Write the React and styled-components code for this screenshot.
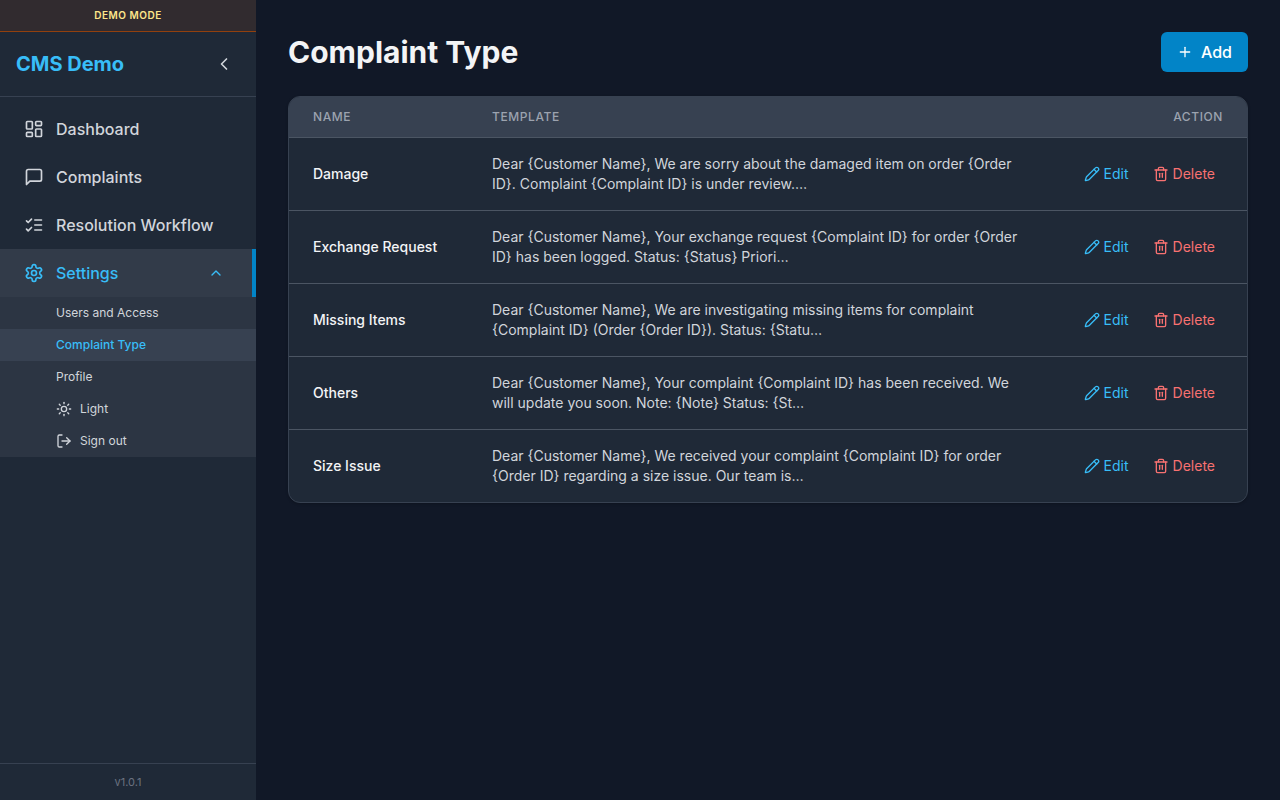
import React, { useState } from 'react';
import styled, { createGlobalStyle, css } from 'styled-components'
import {
    ChevronLeft, ChevronUp, LayoutDashboard, LogOut, Pencil, Plus, Sun, Trash2,
} from 'lucide-react'


const GlobalStyle = createGlobalStyle`
* {
    box-sizing: border-box;
}

body {
    margin: 0;
    background-color: #111827;
    color: #f3f4f6;
    font-family: Inter, "Liberation Sans", sans-serif;
    font-size: 16px;
    line-height: 24px;
}

button {
    border: 0;
    background: none;
    font: inherit;
    color: inherit;
    cursor: pointer;
}

a {
    color: inherit;
    text-decoration: none;
}

svg {
    flex-shrink: 0;
}
`;

export const Page = styled.div`
display: flex;
min-height: 100vh;
`;

export const Sidebar = styled.aside`
position: sticky;
top: 0;
display: flex;
flex-direction: column;
flex: 0 0 256px;
height: 100vh;
background-color: #1f2937;
`;

export const DemoBar = styled.div`
padding: 8px;
border-bottom: 1px solid #92400e;
background-color: #312b2f;
color: #fde68a;
font-size: 10px;
font-weight: 600;
line-height: 15px;
letter-spacing: 0.05em;
text-align: center;
text-transform: uppercase;
`;

export const Brand = styled.div`
display: flex;
align-items: center;
justify-content: space-between;
padding: 16px;
border-bottom: 1px solid #374151;
`;

export const BrandName = styled.span`
color: #38bdf8;
font-size: 20px;
font-weight: 700;
line-height: 28px;
`;

export const CollapseButton = styled.button`
display: flex;
padding: 6px;
color: #d1d5db;
`;

export const Nav = styled.nav`
flex: 1;
padding: 8px 0;
overflow-y: auto;
`;

export const NavIcon = styled.svg`
width: 20px;
height: 20px;
fill: none;
stroke: currentColor;
stroke-width: 2;
stroke-linecap: round;
stroke-linejoin: round;
`;

const navItem = css`
display: flex;
align-items: center;
gap: 12px;
width: 100%;
padding: 12px 24px;
color: #d1d5db;
font-weight: 500;
text-align: left;
`;

export const NavLink = styled.a`
${navItem}
`;

export const NavToggle = styled.button`
${navItem}
padding-right: 28px;
border-right: 4px solid #0284c7;
background-color: #323b49;
color: #38bdf8;

svg:last-child {
    margin-left: auto;
}
`;

export const SubMenu = styled.div`
background-color: #2c3543;
`;

const subItem = css`
display: flex;
align-items: center;
gap: 8px;
width: 100%;
padding: 8px 16px 8px 56px;
color: #d1d5db;
font-size: 12px;
line-height: 16px;
text-align: left;
`;

export const SubLink = styled.a`
${subItem}
${(props) => props.$active &&
    css`
    background-color: #374151;
    color: #38bdf8;
    font-weight: 500;
    `
}
`;

export const SubButton = styled.button`
${subItem}
`;

export const Version = styled.div`
padding: 10px;
border-top: 1px solid #374151;
color: #6b7280;
font-size: 11px;
line-height: 16px;
text-align: center;
`;

export const Main = styled.main`
flex: 1;
min-width: 0;
padding: 32px;
`;

export const PageHead = styled.div`
display: flex;
align-items: center;
justify-content: space-between;
margin-bottom: 24px;
`;

export const Title = styled.h1`
margin: 0;
font-size: 30px;
font-weight: 700;
line-height: 36px;
`;

export const AddButton = styled.button`
display: flex;
align-items: center;
gap: 8px;
padding: 8px 16px;
border-radius: 6px;
background-color: #0284c7;
color: #ffffff;
font-weight: 500;
`;

export const Card = styled.div`
overflow: hidden;
border: 1px solid #374151;
border-radius: 12px;
background-color: #1f2937;
box-shadow: 0 1px 3px rgba(0, 0, 0, 0.2);
`;

export const Table = styled.table`
width: 100%;
border-collapse: collapse;
font-size: 14px;
line-height: 20px;
`;

export const HeadCell = styled.th`
width: ${(props) => props.$width || "auto"};
padding: 12px 24px;
background-color: #374151;
color: #9ca3af;
font-size: 12px;
font-weight: 500;
line-height: 16px;
letter-spacing: 0.05em;
text-align: ${(props) => props.$right ? "right" : "left"};
text-transform: uppercase;
`;

export const Row = styled.tr`
border-top: 1px solid #4b5563;
`;

export const NameCell = styled.td`
padding: 16px 24px;
font-weight: 500;
white-space: nowrap;
`;

export const TemplateCell = styled.td`
padding: 16px 24px;
color: #d1d5db;
`;

export const ActionCell = styled.td`
padding: 16px 24px;
`;

export const Actions = styled.div`
display: flex;
justify-content: flex-end;
gap: 8px;
`;

export const ActionButton = styled.button`
display: flex;
align-items: center;
gap: 4px;
padding: 4px 8px;
color: ${(props) => props.$danger ? "#f87171" : "#38bdf8"};
`;


const types = [
    { name: "Damage", template: "Dear {Customer Name}, We are sorry about the damaged item on order {Order ID}. Complaint {Complaint ID} is under review.…" },
    { name: "Exchange Request", template: "Dear {Customer Name}, Your exchange request {Complaint ID} for order {Order ID} has been logged. Status: {Status} Priori…" },
    { name: "Missing Items", template: "Dear {Customer Name}, We are investigating missing items for complaint {Complaint ID} (Order {Order ID}). Status: {Statu…" },
    { name: "Others", template: "Dear {Customer Name}, Your complaint {Complaint ID} has been received. We will update you soon. Note: {Note} Status: {St…" },
    { name: "Size Issue", template: "Dear {Customer Name}, We received your complaint {Complaint ID} for order {Order ID} regarding a size issue. Our team is…" },
];


const MessageIcon = () => (
    <NavIcon viewBox="0 0 24 24" aria-hidden="true">
        <path d="M21 15a2 2 0 0 1-2 2H7l-4 4V5a2 2 0 0 1 2-2h14a2 2 0 0 1 2 2z" />
    </NavIcon>
);

const ChecksIcon = () => (
    <NavIcon viewBox="0 0 24 24" aria-hidden="true">
        <path d="m3 17 2 2 4-4" />
        <path d="m3 7 2 2 4-4" />
        <path d="M13 6h8" />
        <path d="M13 12h8" />
        <path d="M13 18h8" />
    </NavIcon>
);

const GearIcon = () => (
    <NavIcon viewBox="0 0 24 24" aria-hidden="true">
        <path d="M12.22 2h-.44a2 2 0 0 0-2 2v.18a2 2 0 0 1-1 1.73l-.43.25a2 2 0 0 1-2 0l-.15-.08a2 2 0 0 0-2.73.73l-.22.38a2 2 0 0 0 .73 2.73l.15.1a2 2 0 0 1 1 1.72v.51a2 2 0 0 1-1 1.74l-.15.09a2 2 0 0 0-.73 2.73l.22.38a2 2 0 0 0 2.73.73l.15-.08a2 2 0 0 1 2 0l.43.25a2 2 0 0 1 1 1.73V20a2 2 0 0 0 2 2h.44a2 2 0 0 0 2-2v-.18a2 2 0 0 1 1-1.73l.43-.25a2 2 0 0 1 2 0l.15.08a2 2 0 0 0 2.73-.73l.22-.39a2 2 0 0 0-.73-2.73l-.15-.08a2 2 0 0 1-1-1.74v-.5a2 2 0 0 1 1-1.74l.15-.09a2 2 0 0 0 .73-2.73l-.22-.38a2 2 0 0 0-2.73-.73l-.15.08a2 2 0 0 1-2 0l-.43-.25a2 2 0 0 1-1-1.73V4a2 2 0 0 0-2-2z" />
        <circle cx="12" cy="12" r="3" />
    </NavIcon>
);


const SideMenu = () => {
    const [open, setOpen] = useState(true);

    return (
        <Sidebar>
            <DemoBar>Demo mode</DemoBar>
            <Brand>
                <BrandName>CMS Demo</BrandName>
                <CollapseButton aria-label="Collapse sidebar"><ChevronLeft size={20} /></CollapseButton>
            </Brand>
            <Nav>
                <NavLink href="#dashboard"><LayoutDashboard size={20} />Dashboard</NavLink>
                <NavLink href="#complaints"><MessageIcon />Complaints</NavLink>
                <NavLink href="#workflow"><ChecksIcon />Resolution Workflow</NavLink>
                <NavToggle aria-expanded={open} onClick={() => setOpen(!open)}>
                    <GearIcon />Settings<ChevronUp size={16} />
                </NavToggle>
                {open &&
                    <SubMenu>
                        <SubLink href="#users">Users and Access</SubLink>
                        <SubLink href="#types" $active>Complaint Type</SubLink>
                        <SubLink href="#profile">Profile</SubLink>
                        <SubButton><Sun size={16} />Light</SubButton>
                        <SubButton><LogOut size={16} />Sign out</SubButton>
                    </SubMenu>
                }
            </Nav>
            <Version>v1.0.1</Version>
        </Sidebar>
    );
}


export default function App() {
    return (
        <>
            <GlobalStyle />
            <Page>
                <SideMenu />
                <Main>
                    <PageHead>
                        <Title>Complaint Type</Title>
                        <AddButton><Plus size={16} />Add</AddButton>
                    </PageHead>
                    <Card>
                        <Table>
                            <thead>
                                <tr>
                                    <HeadCell $width="179px">Name</HeadCell>
                                    <HeadCell>Template</HeadCell>
                                    <HeadCell $width="196px" $right>Action</HeadCell>
                                </tr>
                            </thead>
                            <tbody>
                                {types.map((type) => (
                                    <Row key={type.name}>
                                        <NameCell>{type.name}</NameCell>
                                        <TemplateCell>{type.template}</TemplateCell>
                                        <ActionCell>
                                            <Actions>
                                                <ActionButton><Pencil size={16} />Edit</ActionButton>
                                                <ActionButton $danger><Trash2 size={16} />Delete</ActionButton>
                                            </Actions>
                                        </ActionCell>
                                    </Row>
                                ))}
                            </tbody>
                        </Table>
                    </Card>
                </Main>
            </Page>
        </>
    );
}
